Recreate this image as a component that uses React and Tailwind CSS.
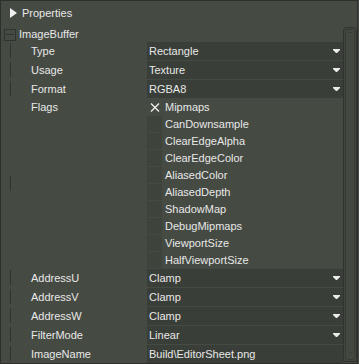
import React from 'react';

const dropdownsTop = [
    { label: 'Type', value: 'Rectangle' },
    { label: 'Usage', value: 'Texture' },
    { label: 'Format', value: 'RGBA8' },
];

const flags = [
    { name: 'Mipmaps', checked: true },
    { name: 'CanDownsample' },
    { name: 'ClearEdgeAlpha' },
    { name: 'ClearEdgeColor' },
    { name: 'AliasedColor' },
    { name: 'AliasedDepth' },
    { name: 'ShadowMap' },
    { name: 'DebugMipmaps' },
    { name: 'ViewportSize' },
    { name: 'HalfViewportSize' },
];

const dropdownsBottom = [
    { label: 'AddressU', value: 'Clamp' },
    { label: 'AddressV', value: 'Clamp' },
    { label: 'AddressW', value: 'Clamp' },
    { label: 'FilterMode', value: 'Linear' },
];

const Arrow = () => (
    <svg width="7" height="4" viewBox="0 0 7 4" className="mr-[3px] shrink-0">
        <polygon points="0,0 7,0 7,1 4,4 3,4 0,1" fill="#ececec" />
    </svg>
);

const TreeLine = ({ center }) => (
    <div className={`w-[30px] shrink-0 pl-[9px] flex ${center ? 'items-center' : 'items-start pt-px'}`}>
        <div className="w-px h-[15px] bg-[#30342e]"></div>
    </div>
);

const PropRow = ({ label, value, dropdown = true, last = false }) => (
    <div className={`flex h-[18px] ${last ? '' : 'mb-px'}`}>
        <TreeLine />
        <div className="w-[116px] shrink-0 flex items-center">{label}</div>
        <div className="flex-1 flex items-center justify-between bg-[#3a3e38] pl-[2px]">
            <span>{value}</span>
            {dropdown && <Arrow />}
        </div>
    </div>
);

const App = () => {
    return (
        <div className="w-[359px] h-[364px] bg-[#454a43]">
            <div
                className="w-[358px] h-[364px] border border-[#2c2f2a] flex flex-col text-[11px] leading-none text-[#e8e8e8]"
                style={{ fontFamily: '"Liberation Sans", Arial, sans-serif' }}
            >
                <div className="h-[26px] shrink-0 flex items-center pl-[9px] pb-[2px]">
                    <svg width="7" height="10" viewBox="0 0 7 10" className="mr-[5px]">
                        <polygon points="0,0 7,5 0,10" fill="#f0f0f0" />
                    </svg>
                    <span>Properties</span>
                </div>

                <div className="flex-1 flex">
                    <div className="w-[342px] flex flex-col">
                        <div className="h-[15px] flex items-center pl-[3px]">
                            <div className="w-[12px] h-[12px] border border-[#30342e] flex items-center justify-center mr-[3px]">
                                <div className="w-[8px] h-px bg-[#30342e]"></div>
                            </div>
                            <span>ImageBuffer</span>
                        </div>

                        {dropdownsTop.map((r) => (
                            <PropRow key={r.label} label={r.label} value={r.value} />
                        ))}

                        <div className="flex mb-px">
                            <TreeLine center />
                            <div className="w-[116px] shrink-0 h-[16px] flex items-center">Flags</div>
                            <div className="flex-1 flex flex-col">
                                {flags.map((f) => (
                                    <div key={f.name} className="h-[16px] mb-px last:mb-0 flex items-center">
                                        <div className={`w-[15px] h-[16px] shrink-0 flex items-center justify-center ${f.checked ? '' : 'bg-[#3e433c]'}`}>
                                            {f.checked && (
                                                <svg width="10" height="9" viewBox="0 0 10 9">
                                                    <path d="M1 0.5 L9 8.5 M9 0.5 L1 8.5" stroke="#f0f0f0" strokeWidth="1.3" fill="none" />
                                                </svg>
                                            )}
                                        </div>
                                        <span className="ml-[3px]">{f.name}</span>
                                    </div>
                                ))}
                            </div>
                        </div>

                        {dropdownsBottom.map((r) => (
                            <PropRow key={r.label} label={r.label} value={r.value} />
                        ))}
                        <PropRow label="ImageName" value="Build\EditorSheet.png" dropdown={false} last />
                    </div>

                    <div className="w-[14px] mb-px flex flex-col rounded-t-[4px] border border-[#30342e] bg-[#41463f] p-px">
                        <div className="flex-1 rounded-[3px] border border-[#383c36] bg-[#444940] flex flex-col items-center justify-between py-[2px]">
                            <div className="w-[4px] h-px bg-[#383c36]"></div>
                            <svg width="5" height="3" viewBox="0 0 5 3" className="mb-[3px]">
                                <polyline points="0,0 2.5,3 5,0" stroke="#383c36" fill="none" />
                            </svg>
                        </div>
                    </div>
                </div>
            </div>
        </div>
    );
};

export default App;
